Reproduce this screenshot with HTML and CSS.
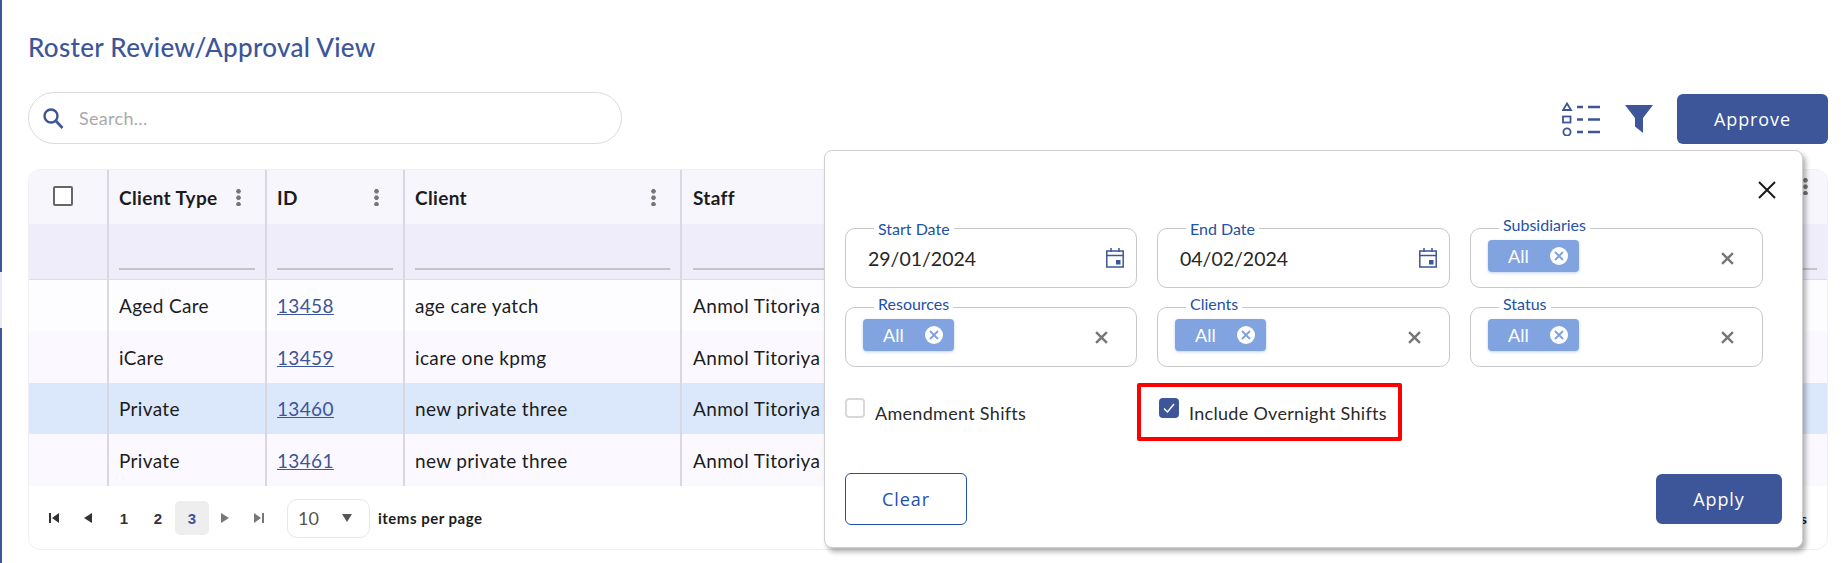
FILE: index.html
```html
<!DOCTYPE html>
<html>
 <head>
  <title>Roster Review/Approval View</title><meta charset="utf-8">
  <link rel="stylesheet" href="styles.css">
 </head>
 <body>
  <div class="edge"></div>
  <div class="page">
    <h1 class="title">Roster Review/Approval View</h1>
    <div class="top-row">
      <div class="search">
        <svg class="search-icon" width="22" height="22" viewBox="0 0 22 22"><circle cx="9" cy="9" r="6.5" fill="none" stroke="#3d5599" stroke-width="2.4"/><path d="M14 14l6.5 7" stroke="#3d5599" stroke-width="2.6" fill="none"/></svg>
        <span class="search-text">Search...</span>
      </div>
      <div class="tools">
        <svg width="38" height="34" viewBox="0 0 38 34" fill="none" stroke="#3d5599" stroke-width="1.800"><path d="M5 1.500L9 8H1z"/><rect x="1" y="14.500" width="7.500" height="6"/><circle cx="5" cy="30" r="3.600"/><path d="M15 5h6M26 5h12M15 17.500h6M26 17.500h12M15 30h6M26 30h12" stroke-width="2.600"/></svg>
        <svg class="funnel" width="28" height="28" viewBox="0 0 28 28"><path d="M0 0h28L18 13v15l-8-6.500V13z" fill="#3d5599"/></svg>
        <button class="btn btn-solid btn-approve">Approve</button>
      </div>
    </div>

    <div class="card">
      <div class="row head">
        <div class="cell"><span class="box"></span></div>
        <div class="cell"><b>Client Type</b><span class="kebab"></span></div>
        <div class="cell"><b>ID</b><span class="kebab"></span></div>
        <div class="cell"><b>Client</b><span class="kebab"></span></div>
        <div class="cell"><b>Staff</b><span class="kebab kebab-last"></span></div>
      </div>
      <div class="row filters">
        <div class="cell"></div>
        <div class="cell"><i></i></div>
        <div class="cell"><i></i></div>
        <div class="cell"><i></i></div>
        <div class="cell"><i></i></div>
      </div>
      <div class="row first">
        <div class="cell"></div>
        <div class="cell">Aged Care</div>
        <div class="cell"><a href="#">13458</a></div>
        <div class="cell">age care yatch</div>
        <div class="cell">Anmol Titoriya</div>
      </div>
      <div class="row">
        <div class="cell"></div>
        <div class="cell">iCare</div>
        <div class="cell"><a href="#">13459</a></div>
        <div class="cell">icare one kpmg</div>
        <div class="cell">Anmol Titoriya</div>
      </div>
      <div class="row selected">
        <div class="cell"></div>
        <div class="cell">Private</div>
        <div class="cell"><a href="#">13460</a></div>
        <div class="cell">new private three</div>
        <div class="cell">Anmol Titoriya</div>
      </div>
      <div class="row">
        <div class="cell"></div>
        <div class="cell">Private</div>
        <div class="cell"><a href="#">13461</a></div>
        <div class="cell">new private three</div>
        <div class="cell">Anmol Titoriya</div>
      </div>
      <div class="pager">
        <div class="pages">
          <span class="pg"><svg width="12" height="12" viewBox="0 0 12 12" fill="#333"><path d="M1 1h2v10H1zM11 1v10L4 6z"/></svg></span>
          <span class="pg pg-prev"><svg width="10" height="12" viewBox="0 0 10 12" fill="#333"><path d="M9 1v10L1 6z"/></svg></span>
          <span class="pg">1</span>
          <span class="pg">2</span>
          <span class="pg current">3</span>
          <span class="pg pg-next"><svg width="10" height="12" viewBox="0 0 10 12" fill="#777"><path d="M1 1v10l8-5z"/></svg></span>
          <span class="pg"><svg width="12" height="12" viewBox="0 0 12 12" fill="#777"><path d="M1 1v10l7-5zM9 1h2v10H9z"/></svg></span>
        </div>
        <div class="size">10<span class="caret"></span></div>
        <span class="per-page">items per page</span>
        <span class="count">1 - 4 of 24 items</span>
      </div>
    </div>
  </div>

  <div class="popup">
    <div class="popup-head">
      <svg width="18" height="18" viewBox="0 0 18 18"><path d="M1 1l16 16M17 1L1 17" stroke="#1a1a1a" stroke-width="2" fill="none"/></svg>
    </div>
    <div class="fields">
      <div class="field date">
        <span class="label">Start Date</span>
        <span class="value">29/01/2024</span>
        <svg class="cal" width="18" height="20" viewBox="0 0 18 20" fill="none" stroke="#3d5599" stroke-width="1.500"><rect x=".8" y="3" width="16.400" height="16"/><path d="M.8 7.500h16.400M5 0v4M13 0v4"/><rect x="10" y="12" width="4.500" height="4.500" fill="#3d5599" stroke="none"/></svg>
      </div>
      <div class="field date">
        <span class="label">End Date</span>
        <span class="value">04/02/2024</span>
        <svg class="cal" width="18" height="20" viewBox="0 0 18 20" fill="none" stroke="#3d5599" stroke-width="1.500"><rect x=".8" y="3" width="16.400" height="16"/><path d="M.8 7.500h16.400M5 0v4M13 0v4"/><rect x="10" y="12" width="4.500" height="4.500" fill="#3d5599" stroke="none"/></svg>
      </div>
      <div class="field multi">
        <span class="label raised">Subsidiaries</span>
        <span class="chip">All<span class="chip-x"><svg width="10" height="10" viewBox="0 0 10 10"><path d="M1 1l8 8M9 1L1 9" stroke="#81a4e0" stroke-width="2"/></svg></span></span>
        <svg width="13" height="13" viewBox="0 0 12 12"><path d="M1 1l10 10M11 1L1 11" stroke="#757575" stroke-width="2.200"/></svg>
      </div>
      <div class="field multi">
        <span class="label raised">Resources</span>
        <span class="chip">All<span class="chip-x"><svg width="10" height="10" viewBox="0 0 10 10"><path d="M1 1l8 8M9 1L1 9" stroke="#81a4e0" stroke-width="2"/></svg></span></span>
        <svg width="13" height="13" viewBox="0 0 12 12"><path d="M1 1l10 10M11 1L1 11" stroke="#757575" stroke-width="2.200"/></svg>
      </div>
      <div class="field multi">
        <span class="label raised">Clients</span>
        <span class="chip">All<span class="chip-x"><svg width="10" height="10" viewBox="0 0 10 10"><path d="M1 1l8 8M9 1L1 9" stroke="#81a4e0" stroke-width="2"/></svg></span></span>
        <svg width="13" height="13" viewBox="0 0 12 12"><path d="M1 1l10 10M11 1L1 11" stroke="#757575" stroke-width="2.200"/></svg>
      </div>
      <div class="field multi">
        <span class="label raised">Status</span>
        <span class="chip">All<span class="chip-x"><svg width="10" height="10" viewBox="0 0 10 10"><path d="M1 1l8 8M9 1L1 9" stroke="#81a4e0" stroke-width="2"/></svg></span></span>
        <svg width="13" height="13" viewBox="0 0 12 12"><path d="M1 1l10 10M11 1L1 11" stroke="#757575" stroke-width="2.200"/></svg>
      </div>
    </div>
    <div class="checks">
      <div class="check plain"><span class="tick"></span><span>Amendment Shifts</span></div>
      <div class="check marked">
        <span class="tick on"><svg width="14" height="12" viewBox="0 0 14 12"><path d="M2 6.500l3.500 3.500L12 2" stroke="#fff" stroke-width="1.500" fill="none"/></svg></span>
        <span>Include Overnight Shifts</span>
      </div>
    </div>
    <div class="popup-foot">
      <button class="btn btn-line">Clear</button>
      <button class="btn btn-solid btn-apply">Apply</button>
    </div>
  </div>
 </body>
</html>
```

FILE: styles.css
```css
* {
  box-sizing: border-box;
}

html,
body {
  margin: 0;
  height: 563px;
  overflow: hidden;
  background: #fff;
  font-family: "Lato", "Open Sans", sans-serif;
  color: #1c1c1c;
}

body {
  position: relative;
}

.edge {
  position: absolute;
  left: 0;
  top: 0;
  bottom: 0;
  width: 2px;
  background: linear-gradient(#3d5599 272px, #e9ebf4 272px, #e9ebf4 328px, #3d5599 328px);
}

.page {
  padding: 30px 17px 0 28px;
}

.title {
  margin: 0 0 28px;
  font-size: 26px;
  line-height: 34px;
  font-weight: 500;
  letter-spacing: .3px;
  color: #3d5599;
}

.top-row {
  display: flex;
  justify-content: space-between;
  align-items: flex-end;
  height: 52px;
  margin-bottom: 25px;
}

.search {
  display: flex;
  align-items: center;
  width: 594px;
  height: 52px;
  padding-left: 13px;
  border: 1px solid #dcdcdc;
  border-radius: 26px;
}

.search-text {
  margin-left: 15px;
  font-size: 18px;
  letter-spacing: .3px;
  color: #a9a9a9;
}

.tools {
  display: flex;
  align-items: center;
}

.funnel {
  margin: 0 24px 0 25px;
}

.btn {
  font-family: "Open Sans", sans-serif;
  font-size: 18px;
  letter-spacing: .9px;
  border-radius: 6px;
  cursor: pointer;
}

.btn-solid {
  background: #3d5599;
  border: 0;
  color: #fff;
}

.btn-approve {
  width: 151px;
  height: 50px;
}

.btn-apply {
  width: 126px;
  height: 50px;
}

.btn-line {
  width: 122px;
  height: 52px;
  background: #fff;
  border: 1px solid #2251a8;
  color: #2251a8;
}

.card {
  height: 381px;
  border: 1px solid #f0f0f3;
  border-radius: 12px;
  overflow: hidden;
}

.row {
  display: grid;
  grid-template-columns: 78px 158px 138px 277px 1fr;
  height: 52px;
  background: #fbf9ff;
  font-size: 19px;
  letter-spacing: .35px;
}

.row.first {
  background: #fdfcff;
  height: 51px;
}

.row.selected {
  background: #dbe8fb;
  height: 51px;
}

.row.head {
  height: 54px;
  background: #f8f6fd;
}

.row.filters {
  height: 56px;
  background: #efedf9;
  border-bottom: 1px solid #dedde6;
}

.cell {
  display: flex;
  align-items: center;
  padding-left: 10px;
  border-left: 2px solid #d9d8e0;
}

.cell:first-child {
  border-left: 0;
}

.cell:last-child {
  padding-left: 11px;
}

.head .cell {
  justify-content: space-between;
  padding-right: 24px;
}

.head .cell:first-child {
  padding: 0 0 2px 24px;
}

.filters .cell {
  align-items: flex-end;
  padding: 0 10px 9px 10px;
}

.filters .cell:last-child {
  padding-left: 11px;
}

.filters i {
  display: block;
  width: 100%;
  height: 2px;
  background: #c4c4c4;
}

.box {
  width: 20px;
  height: 20px;
  border: 2px solid #666;
  border-radius: 2px;
  background: #fff;
}

.kebab {
  width: 5px;
  height: 18px;
  background: radial-gradient(circle, #757575 2px, transparent 2.500px) 0 0 / 5px 6.500px repeat-y;
}

.kebab-last {
  align-self: flex-start;
  margin: 7px -5px 0 0;
}

.row a {
  color: #3d5599;
}

.pager {
  position: relative;
  display: flex;
  align-items: center;
  height: 64px;
  padding-left: 8px;
}

.pages {
  display: flex;
  align-items: center;
}

.pg {
  display: flex;
  align-items: center;
  justify-content: center;
  width: 34px;
  height: 34px;
  border-radius: 5px;
  font-family: "Liberation Sans", sans-serif;
  font-size: 15px;
  font-weight: 700;
  color: #333;
}

.pg.current {
  background: #eeeeee;
  color: #3d5599;
}

.pg-prev {
  margin-right: 2px;
}

.pg-next {
  margin-left: -1px;
}

.size {
  display: flex;
  align-items: center;
  justify-content: space-between;
  width: 83px;
  height: 39px;
  margin-left: 11px;
  padding: 0 17px 0 10px;
  border: 1px solid #e8e8e8;
  border-radius: 10px;
  font-size: 18px;
  color: #555;
}

.caret {
  width: 0;
  height: 0;
  border-left: 5.500px solid transparent;
  border-right: 5.500px solid transparent;
  border-top: 8px solid #555;
}

.per-page {
  margin-left: 8px;
  font-size: 15px;
  font-weight: 700;
  letter-spacing: .5px;
}

.count {
  margin-left: auto;
  margin-right: 20px;
  font-size: 14px;
  font-weight: 700;
}

.popup {
  position: absolute;
  left: 824px;
  top: 150px;
  width: 979px;
  height: 398px;
  padding: 0 20px;
  background: #fff;
  border: 1px solid #cfcfcf;
  border-radius: 8px;
  box-shadow: 3px 4px 5px rgba(0, 0, 0, .3);
}

.popup-head {
  display: flex;
  justify-content: flex-end;
  align-items: center;
  height: 77px;
  padding-right: 6px;
}

.fields {
  display: grid;
  grid-template-columns: 292px 293px 293px;
  gap: 19px 20px;
}

.field {
  position: relative;
  display: flex;
  justify-content: space-between;
  align-items: center;
  height: 60px;
  border: 1px solid #c8c8c8;
  border-radius: 10px;
}

.field.date {
  padding: 0 12px 0 22px;
}

.field.multi {
  padding: 0 28px 0 17px;
}

.label {
  position: absolute;
  left: 28px;
  top: -9px;
  padding: 0 4px;
  background: #fff;
  font-size: 16px;
  line-height: 18px;
  color: #2251a8;
}

.label.raised {
  top: -13px;
}

.value {
  font-size: 19.500px;
  color: #262626;
}

.chip {
  align-self: flex-start;
  display: flex;
  align-items: center;
  justify-content: space-between;
  width: 91px;
  height: 32px;
  margin-top: 11px;
  padding: 0 11px 0 20px;
  border-radius: 4px;
  background: #81a4e0;
  box-shadow: 0 1px 3px rgba(129, 164, 224, .5);
  font-size: 18px;
  color: #fff;
}

.chip-x {
  display: flex;
  align-items: center;
  justify-content: center;
  width: 18px;
  height: 18px;
  border-radius: 50%;
  background: #fff;
}

.checks {
  display: flex;
  margin-top: 16px;
  height: 58px;
  font-size: 18px;
  letter-spacing: .3px;
  color: #2a2a2a;
}

.check {
  display: flex;
  align-items: flex-start;
  gap: 10px;
}

.check.plain {
  width: 292px;
  padding-top: 15px;
}

.check.marked {
  width: 265px;
  padding: 11px 0 0 18px;
  border: 4px solid #f00;
  border-radius: 2px;
}

.check span:last-child {
  margin-top: 4px;
}

.tick {
  display: flex;
  align-items: center;
  justify-content: center;
  width: 20px;
  height: 20px;
  border: 2px solid #d8d8d8;
  border-radius: 4px;
}

.check span.tick {
  margin-top: 0;
}

.tick.on {
  background: #3d5599;
  border-color: #3d5599;
}

.popup-foot {
  display: flex;
  justify-content: space-between;
  align-items: center;
  margin-top: 32px;
}
```
